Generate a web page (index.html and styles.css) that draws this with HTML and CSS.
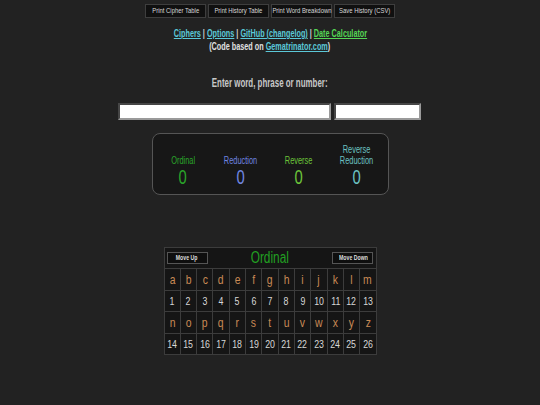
FILE: index.html
```html
<!DOCTYPE html>
<html>
<head>
<meta charset="utf-8">
<link rel="stylesheet" href="styles.css">
</head>
<body>
<div class="page">
  <nav class="topbar">
    <button class="tbtn"><span class="nw">Print Cipher Table</span></button>
    <button class="tbtn"><span class="nw">Print History Table</span></button>
    <button class="tbtn"><span class="nw">Print Word Breakdown</span></button>
    <button class="tbtn"><span class="nw">Save History (CSV)</span></button>
  </nav>
  <div class="links"><span class="nw nw2"><a class="lnk">Ciphers</a> | <a class="lnk">Options</a> | <a class="lnk">GitHub (changelog)</a> | <a class="lnk green">Date Calculator</a></span></div>
  <div class="credit"><span class="nw nw2">(Code based on <a class="lnk">Gematrinator.com</a>)</span></div>
  <div class="prompt"><span class="nw nw2">Enter word, phrase or number:</span></div>
  <div class="inputs">
    <input class="main-input" type="text">
    <input class="side-input" type="text">
  </div>
  <div class="results">
    <div class="res c-ord"><div class="rlabel nw">Ordinal</div><div class="rval nw">0</div></div>
    <div class="res c-red"><div class="rlabel nw">Reduction</div><div class="rval nw">0</div></div>
    <div class="res c-rev"><div class="rlabel nw">Reverse</div><div class="rval nw">0</div></div>
    <div class="res c-rr"><div class="rlabel nw">Reverse<br>Reduction</div><div class="rval nw">0</div></div>
  </div>
  <div class="cipher">
    <div class="chead">
      <button class="mbtn"><span class="nw">Move Up</span></button>
      <div class="ctitle"><span class="nw">Ordinal</span></div>
      <button class="mbtn"><span class="nw">Move Down</span></button>
    </div>
    <div class="grid">
      <div class="l"><span>a</span></div><div class="l"><span>b</span></div><div class="l"><span>c</span></div><div class="l"><span>d</span></div><div class="l"><span>e</span></div><div class="l"><span>f</span></div><div class="l"><span>g</span></div><div class="l"><span>h</span></div><div class="l"><span>i</span></div><div class="l"><span>j</span></div><div class="l"><span>k</span></div><div class="l"><span>l</span></div><div class="l"><span>m</span></div>
      <div class="n"><span>1</span></div><div class="n"><span>2</span></div><div class="n"><span>3</span></div><div class="n"><span>4</span></div><div class="n"><span>5</span></div><div class="n"><span>6</span></div><div class="n"><span>7</span></div><div class="n"><span>8</span></div><div class="n"><span>9</span></div><div class="n"><span>10</span></div><div class="n"><span>11</span></div><div class="n"><span>12</span></div><div class="n"><span>13</span></div>
      <div class="l"><span>n</span></div><div class="l"><span>o</span></div><div class="l"><span>p</span></div><div class="l"><span>q</span></div><div class="l"><span>r</span></div><div class="l"><span>s</span></div><div class="l"><span>t</span></div><div class="l"><span>u</span></div><div class="l"><span>v</span></div><div class="l"><span>w</span></div><div class="l"><span>x</span></div><div class="l"><span>y</span></div><div class="l"><span>z</span></div>
      <div class="n"><span>14</span></div><div class="n"><span>15</span></div><div class="n"><span>16</span></div><div class="n"><span>17</span></div><div class="n"><span>18</span></div><div class="n"><span>19</span></div><div class="n"><span>20</span></div><div class="n"><span>21</span></div><div class="n"><span>22</span></div><div class="n"><span>23</span></div><div class="n"><span>24</span></div><div class="n"><span>25</span></div><div class="n"><span>26</span></div>
    </div>
  </div>
</div>
</body>
</html>
```
FILE: styles.css
```css
html, body {
  margin: 0;
  padding: 0;
  background: #222222;
  width: 540px;
  height: 405px;
  overflow: hidden;
}
body {
  font-family: "Liberation Sans", Arial, sans-serif;
  color: #d0d0d0;
}
.nw {
  display: inline-block;
  white-space: nowrap;
  transform: scaleX(0.74);
}
.nw2 {
  transform: scaleX(0.66);
}
.page {
  display: flex;
  flex-direction: column;
  align-items: center;
}
.topbar {
  display: flex;
  gap: 2px;
  margin-top: 4px;
}
.tbtn {
  width: 61px;
  height: 14px;
  padding: 0;
  background: #101010;
  border: 1px solid #3e3e3e;
  color: #d8d8d8;
  font-family: inherit;
  font-size: 8px;
  line-height: 12px;
  display: flex;
  justify-content: center;
  align-items: center;
  overflow: visible;
}
.links {
  margin-top: 9px;
  font-size: 11px;
  font-weight: bold;
  color: #cfcfcf;
  line-height: 13px;
}
.lnk {
  color: #5bc8d8;
  text-decoration: underline;
}
.lnk.green {
  color: #55d655;
}
.credit {
  font-size: 11px;
  font-weight: bold;
  color: #e0e0e0;
  line-height: 13px;
}
.prompt {
  margin-top: 23px;
  font-size: 12px;
  font-weight: bold;
  color: #c8c8c8;
  line-height: 14px;
}
.inputs {
  display: flex;
  gap: 3px;
  margin-top: 13px;
  margin-right: 2px;
}
.main-input, .side-input {
  box-sizing: border-box;
  height: 17px;
  margin: 0;
  background: #fff;
  border: 2px inset #9a9a9a;
  padding: 0;
}
.main-input { width: 213px; }
.side-input { width: 87px; }
.results {
  box-sizing: border-box;
  margin-top: 13px;
  width: 237px;
  height: 62px;
  border: 1px solid #555;
  border-radius: 8px;
  background: #171717;
  display: flex;
  justify-content: center;
  align-items: flex-end;
  padding: 0 0 7px;
}
.res {
  display: flex;
  flex-direction: column;
  align-items: center;
  width: 58px;
}
.rlabel {
  font-size: 10px;
  line-height: 11px;
  text-align: center;
}
.rval {
  font-size: 20px;
  line-height: 20px;
  margin-top: 1px;
}
.c-ord { color: #2aa52a; }
.c-red { color: #6f86e0; }
.c-rev { color: #6cc43a; }
.c-rr { color: #6cc2c2; }
.cipher {
  margin-top: 52px;
  width: 211px;
  border: 1px solid #3c3c3c;
  background: #151515;
}
.chead {
  height: 20px;
  display: flex;
  align-items: center;
  justify-content: space-between;
  padding: 0 2px;
  border-bottom: 1px solid #3c3c3c;
}
.mbtn {
  width: 41px;
  height: 12px;
  padding: 0;
  background: #0e0e0e;
  border: 1px solid #555;
  color: #ddd;
  font-family: inherit;
  font-size: 7px;
  font-weight: bold;
  line-height: 10px;
  display: flex;
  justify-content: center;
  align-items: center;
}
.ctitle {
  color: #22a022;
  font-size: 16px;
  line-height: 16px;
}
.grid {
  display: grid;
  grid-template-columns: repeat(13, 1fr);
  grid-auto-rows: 20.5px;
  gap: 1px;
  background: #3c3c3c;
}
.grid > div {
  background: #151515;
  display: flex;
  align-items: center;
  justify-content: center;
}
.grid span {
  display: inline-block;
  transform: scaleX(0.8);
}
.l {
  color: #c98a55;
  font-size: 13px;
}
.n {
  color: #d8d8d8;
  font-size: 11px;
}
```
